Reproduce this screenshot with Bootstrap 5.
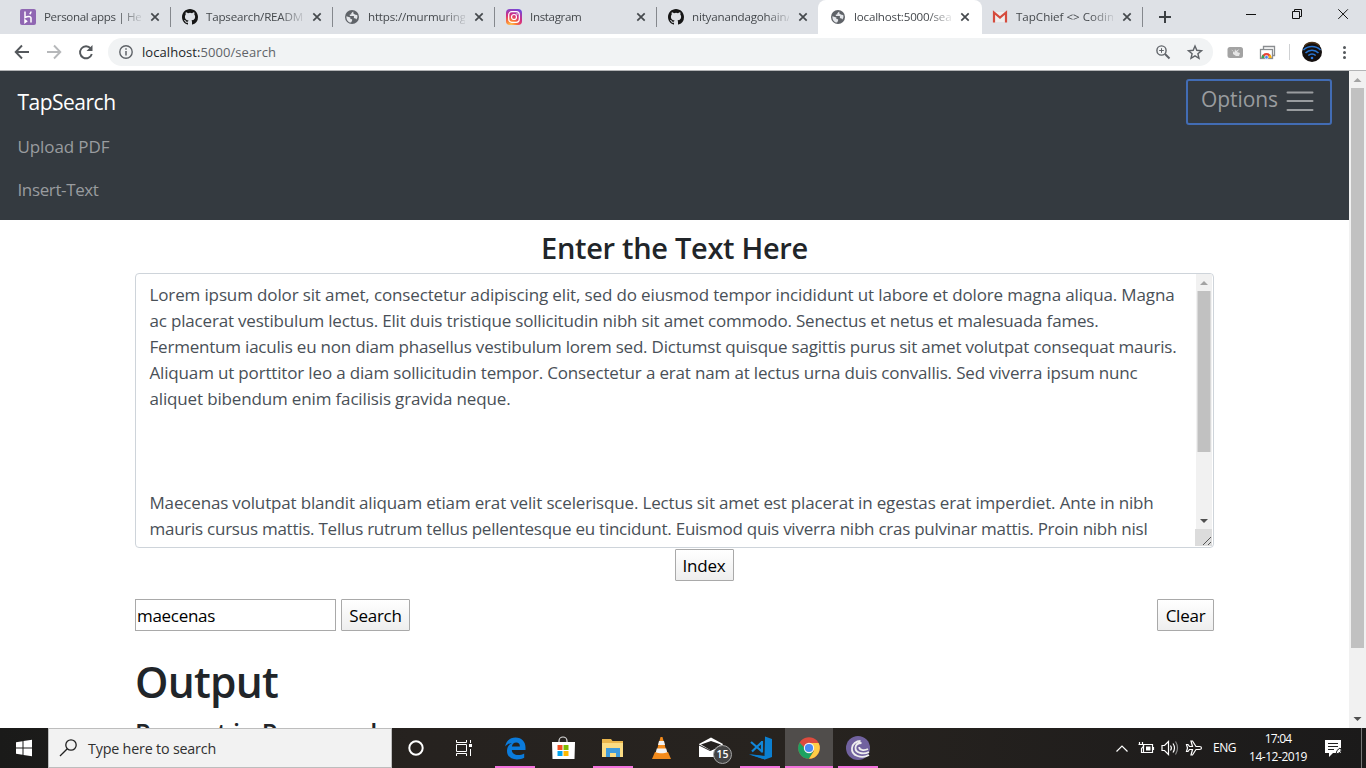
<!DOCTYPE html>
<html lang="en">
<head>
<meta charset="utf-8">
<title>TapSearch</title>
<link rel="stylesheet" href="https://cdn.jsdelivr.net/npm/bootstrap@5.3.0/dist/css/bootstrap.min.css">
<style>
body{font-family:"Open Sans","Noto Sans",sans-serif;width:1366px;height:768px;overflow:hidden;color:#212529}
svg{display:block;flex:none}
.fit{white-space:nowrap;display:inline-block}
.tabstrip{height:34px;background:#dee1e6;padding-left:9px}
.tab{width:162px;height:34px;padding-left:11px;font-size:11.6px;color:#45494d;position:relative}
.tab .ttl{width:97px;margin-left:8px;overflow:hidden;white-space:nowrap;letter-spacing:-.0165em;-webkit-mask-image:linear-gradient(90deg,#000 76%,rgba(0,0,0,.15))}
.tab .ttl.tight{letter-spacing:-.031em}
.tab .ttl.loose{letter-spacing:-.002em}
.tab .x{margin-left:9px}
.tab:after{content:"";width:1px;height:20px;background:#85888d;position:absolute;right:0;top:7px}
.tab.pre:after,.tab.on:after{display:none}
.tab.on:before{content:"";position:absolute;inset:0 -1px 0 -1px;background:#fff;border-radius:8px 8px 0 0}
.tab.on>*{position:relative}
.toolbar{height:36px;background:#fff}
.omni{width:1105px;height:28px;border-radius:14px;background:#f1f3f4;font-size:13px;color:#5f6368}
.omni .fit{padding-top:1px;letter-spacing:.005em}
.viewport{height:658px;border-top:1px solid #b3b4b6;overflow:hidden}
.vbar{background:#f1f1f1}
.topnav{height:149px;background:#343a40;padding:0 17px 0 17.5px}
.brandname{font-size:21px;line-height:33px;color:#fff;margin-top:15px;letter-spacing:-.024em}
.navitem{font-size:17px;line-height:43px;color:#999c9f;letter-spacing:-.006em}
.navitem.first{margin-top:6px}
.navitem.tight{letter-spacing:-.022em}
.opt{width:146px;height:46px;border:2px solid #426cb4;border-radius:3px;margin-top:8px;color:#999c9f;font-size:21px;line-height:37px;padding-left:13px;letter-spacing:-.003em}
.page-col{width:1079px;margin-left:135px}
.h-enter{font-size:29px;font-weight:600;line-height:36px;margin:10px 0 7px;letter-spacing:-.0105em}
.area{height:275px;border:1px solid #ced4da;border-radius:4px;overflow:hidden}
.area .txt{padding:8px 0 0 13.5px;font-size:17px;line-height:26px;color:#495057;min-width:0}
.area .txt div{height:26px}
.l1{letter-spacing:-.0078em}.l2{letter-spacing:-.0107em}.l3{letter-spacing:-.0122em}.l4{letter-spacing:-.0096em}.l5{letter-spacing:-.0089em}.l9{letter-spacing:-.0098em}.l10{letter-spacing:-.0148em}.l11{letter-spacing:-.012em}
.btn-old{height:32px;border:1px solid #a9a9a9;border-radius:1px;background:linear-gradient(#fff,#eee);font-size:17px;line-height:31px;color:#000;text-align:center;letter-spacing:-.014em}
.inp{width:201px;height:32px;border:1px solid #a9a9a9;font-size:17px;line-height:31px;color:#000;padding-left:1px;margin-right:5px;letter-spacing:-.0177em}
.row-index{margin-top:1px;padding-left:59px}
.row-search{margin-top:18px}
.w-index{width:59px}.w-search{width:69px}.w-clear{width:57px}
.h-out{font-size:42.5px;font-weight:600;line-height:52px;margin:25px 0 8px;letter-spacing:-.0178em}
.h-par{font-size:25.3px;font-weight:600;line-height:32px;letter-spacing:-.0129em}
.taskbar{height:40px;background:linear-gradient(90deg,#1a1a19 0,#26221f 30%,#27231f 60%,#1f1d1c 85%,#1b1a1a);position:relative}
.sbox{width:344px;height:40px;background:#f2f2f2;border:1px solid #bdbdbd;font-size:14.3px;color:#303030;letter-spacing:-.0131em}
.sbox .fit{padding-top:1px}
.app{width:49px;height:40px;position:relative}
.app.run:after{content:"";position:absolute;bottom:0;left:4px;width:40px;height:2px;background:#f272dd}
.app.cur{width:48px;background:#504d4b}
.app.cur:after{left:0;width:48px}
.app.last{margin-left:1px}
.cnt{position:absolute;left:26px;top:17px;width:19px;height:19px;border:1px solid #a5a5a5;border-radius:50%;background:#444;color:#fff;font-size:10.5px;font-weight:600;line-height:17px;text-align:center}
.tray{color:#fff;font-size:12px}
.eng{width:24px;margin:0 9px 0 2px;letter-spacing:-.04em}
.clock{font-size:12px;line-height:18px;width:64px}
.clock .time{letter-spacing:-.07em}
.clock .date{letter-spacing:-.0385em}
</style>
</head>
<body>
<svg width="0" height="0" class="position-absolute">
<symbol id="x" viewBox="0 0 10 10"><path d="M1.3 1.3l7.4 7.4M8.7 1.3L1.3 8.7" stroke="#45494d" stroke-width="1.7"/></symbol>
<symbol id="gh" viewBox="0 0 16 16"><path fill="#161616" d="M8 0C3.58 0 0 3.58 0 8c0 3.54 2.29 6.53 5.47 7.59.4.07.55-.17.55-.38 0-.19-.01-.82-.01-1.49-2.01.37-2.53-.49-2.69-.94-.09-.23-.48-.94-.82-1.13-.28-.15-.68-.52-.01-.53.63-.01 1.08.58 1.23.82.72 1.21 1.87.87 2.33.66.07-.52.28-.87.51-1.07-1.78-.2-3.64-.89-3.64-3.95 0-.87.31-1.59.82-2.15-.08-.2-.36-1.02.08-2.12 0 0 .67-.21 2.2.82a7.6 7.6 0 0 1 4 0c1.53-1.04 2.2-.82 2.2-.82.44 1.1.16 1.92.08 2.12.51.56.82 1.27.82 2.15 0 3.07-1.87 3.75-3.65 3.95.29.25.54.73.54 1.48 0 1.07-.01 1.93-.01 2.2 0 .21.15.46.55.38A8 8 0 0 0 16 8c0-4.42-3.58-8-8-8z"/></symbol>
<symbol id="globe" viewBox="0 0 16 16"><circle cx="8" cy="8" r="7" fill="#5f6368"/><path d="M9.2 2.4L7.3 4.3v1.3H5.8v1.5h4.1v2.2h1.4l.9 1.1c1.2-1 1.6-2.6 1-4.3L11.5 5.8 9.5 4.8zM2.4 7.2l4 1.3v1.6l1.7.1v1.5l-1 1.9C4.3 13.5 2.2 11 2.4 7.2z" fill="#e4e6ea"/></symbol>
</svg>

<div class="tabstrip d-flex">
 <div class="tab d-flex align-items-center"><svg width="16" height="16"><rect width="16" height="16" rx="2" fill="#9067b3"/><path d="M5 2.5v6.2c2-1.200 6-2 6 .3v4.500M11 2.500c0 1.200-.6 2-1.300 2.700M5 11v2.500l1.600-1.200z" stroke="#fff" stroke-width="1.5" fill="none"/></svg><div class="ttl tight">Personal apps | He</div><svg class="x" width="10" height="10"><use href="#x"/></svg></div>
 <div class="tab d-flex align-items-center"><svg width="16" height="16"><use href="#gh"/></svg><div class="ttl">Tapsearch/READM</div><svg class="x" width="10" height="10"><use href="#x"/></svg></div>
 <div class="tab d-flex align-items-center"><svg width="16" height="16"><use href="#globe"/></svg><div class="ttl">https://murmuring</div><svg class="x" width="10" height="10"><use href="#x"/></svg></div>
 <div class="tab d-flex align-items-center"><svg width="16" height="16"><defs><radialGradient id="ig" cx=".3" cy="1.05" r="1.15"><stop offset="0" stop-color="#fed45c"/><stop offset=".3" stop-color="#fb7c35"/><stop offset=".6" stop-color="#d62d7e"/><stop offset="1" stop-color="#6c4ae0"/></radialGradient></defs><rect width="16" height="16" rx="4" fill="url(#ig)"/><rect x="2.7" y="2.7" width="10.6" height="10.6" rx="3" fill="none" stroke="#fff" stroke-width="1.2"/><circle cx="8" cy="8" r="2.5" fill="none" stroke="#fff" stroke-width="1.2"/><circle cx="11" cy="5" r=".7" fill="#fff"/></svg><div class="ttl tight">Instagram</div><svg class="x" width="10" height="10"><use href="#x"/></svg></div>
 <div class="tab pre d-flex align-items-center"><svg width="16" height="16"><use href="#gh"/></svg><div class="ttl">nityanandagohain/</div><svg class="x" width="10" height="10"><use href="#x"/></svg></div>
 <div class="tab on d-flex align-items-center"><svg width="16" height="16"><use href="#globe"/></svg><div class="ttl">localhost:5000/sea</div><svg class="x" width="10" height="10"><use href="#x"/></svg></div>
 <div class="tab d-flex align-items-center"><svg width="16" height="16"><path d="M2 3h12v10H2z" fill="#eee"/><path d="M2 13.500V3.500l6 5 6-5v10" fill="none" stroke="#d54b3d" stroke-width="2.2"/></svg><div class="ttl loose">TapChief &lt;&gt; Codin</div><svg class="x" width="10" height="10"><use href="#x"/></svg></div>
 <svg width="222" height="34" viewBox="1143 0 222 34"><path d="M1159 17h12M1165 11v12" stroke="#3c4043" stroke-width="2"/><path d="M1246 14.5h10M1292.5 11.500h7v7h-7zM1294.500 11v-1.500h7v7h-2M1338.300 9.300l9.600 9.600M1347.900 9.300l-9.600 9.600" stroke="#111" fill="none"/></svg>
</div>

<div class="toolbar d-flex align-items-center">
 <svg width="108" height="36" viewBox="0 34 108 36" fill="none" stroke-width="1.9"><path d="M29 52H16M22 45.500L15.700 52l6.300 6.500" stroke="#54585c"/><path d="M47 52h13M54 45.500l6.300 6.500-6.300 6.500" stroke="#b6b8ba"/><path d="M90.700 48.500A6 6 0 1 0 91.800 54" stroke="#54585c"/><path d="M92.500 45v6h-6z" fill="#54585c"/></svg>
 <div class="omni d-flex align-items-center">
  <svg width="34" height="28" viewBox="108 38 34 28"><circle cx="126" cy="52" r="6.2" fill="none" stroke="#5f6368" stroke-width="1.4"/><path d="M126 51v4.500M126 48.200v1.600" stroke="#5f6368" stroke-width="1.5"/></svg>
  <span class="fit"><span class="text-dark">localhost:</span>5000/search</span>
  <svg class="ms-auto" width="63" height="28" viewBox="1150 38 63 28" fill="none" stroke="#5f6368" stroke-width="1.4"><circle cx="1161.5" cy="50.5" r="4.6"/><path d="M1165 54l4.500 4.500" stroke-width="1.9"/><path d="M1159.200 50.500h4.600M1161.500 48.200v4.600" stroke-width="1"/><path d="M1195 46l1.800 4.300 4.700.4-3.600 3 1.100 4.600-4-2.500-4 2.500 1.100-4.600-3.600-3 4.700-.4z"/></svg>
 </div>
 <svg width="153" height="36" viewBox="1213 34 153 36"><rect x="1227.500" y="47" width="15.500" height="11" rx="2.5" fill="#a3a3a3"/><path d="M1231 49.500l2 1v3.500l3 2h3l1-3-3-1 2.500-3-3.500 2-1-2-.5 3.500z" fill="#e6e6e6"/><path d="M1263.500 46.500h11v9h-11z" fill="#fff" stroke="#8a8d90" stroke-width="1.3"/><rect x="1260.5" y="49.5" width="12" height="9" fill="#fff" stroke="#8a8d90" stroke-width="1.3"/><path d="M1261.500 58a5 5 0 0 1 10 0z" fill="#ea4335"/><path d="M1261.500 58a5 5 0 0 1 1.500-3.500l2 3.500z" fill="#34a853"/><path d="M1271.500 58a5 5 0 0 0-1.500-3.500l-2 3.500z" fill="#fbbc05"/><circle cx="1266.5" cy="57.2" r="1.8" fill="#4285f4" stroke="#fff" stroke-width=".7"/><path d="M1289.500 44v16" stroke="#cfd1d3"/><circle cx="1312" cy="52" r="10" fill="#15100f"/><path d="M1303.500 50a12 12 0 0 1 17 0M1305.500 53a9 9 0 0 1 13 0M1308.300 55.500a5.500 5.500 0 0 1 7.400 0" stroke="#2874d0" stroke-width="1.6" fill="none"/><circle cx="1312" cy="58" r="1.3" fill="#2d7be0"/><path d="M1304.500 46a10 10 0 0 1 15 0" stroke="#4c341a" stroke-width="1.5" fill="none"/><g fill="#54585c"><circle cx="1344.500" cy="47.5" r="1.5"/><circle cx="1344.500" cy="52.5" r="1.5"/><circle cx="1344.500" cy="57.5" r="1.5"/></g></svg>
</div>

<div class="viewport d-flex">
 <main class="flex-grow-1 bg-white">
  <nav class="topnav d-flex justify-content-between align-items-start">
   <div class="d-flex flex-column align-items-start">
    <span class="brandname fit">TapSearch</span>
    <span class="navitem first fit">Upload PDF</span>
    <span class="navitem tight fit">Insert-Text</span>
   </div>
   <div class="opt d-flex"><span class="fit">Options</span><svg class="ms-2" width="29" height="37" viewBox="0 0 29 37"><path d="M1.500 11.500h25M1.500 20h25M1.500 29h25" stroke="#999c9f" stroke-width="2" stroke-linecap="round"/></svg></div>
  </nav>
  <div class="page-col">
   <h3 class="h-enter text-center">Enter the Text Here</h3>
   <div class="area d-flex">
    <div class="txt flex-grow-1">
     <div><span class="fit l1">Lorem ipsum dolor sit amet, consectetur adipiscing elit, sed do eiusmod tempor incididunt ut labore et dolore magna aliqua. Magna</span></div>
     <div><span class="fit l2">ac placerat vestibulum lectus. Elit duis tristique sollicitudin nibh sit amet commodo. Senectus et netus et malesuada fames.</span></div>
     <div><span class="fit l3">Fermentum iaculis eu non diam phasellus vestibulum lorem sed. Dictumst quisque sagittis purus sit amet volutpat consequat mauris.</span></div>
     <div><span class="fit l4">Aliquam ut porttitor leo a diam sollicitudin tempor. Consectetur a erat nam at lectus urna duis convallis. Sed viverra ipsum nunc</span></div>
     <div><span class="fit l5">aliquet bibendum enim facilisis gravida neque.</span></div>
     <div></div><div></div><div></div>
     <div><span class="fit l9">Maecenas volutpat blandit aliquam etiam erat velit scelerisque. Lectus sit amet est placerat in egestas erat imperdiet. Ante in nibh</span></div>
     <div><span class="fit l10">mauris cursus mattis. Tellus rutrum tellus pellentesque eu tincidunt. Euismod quis viverra nibh cras pulvinar mattis. Proin nibh nisl</span></div>
     <div><span class="fit l11">condimentum id venenatis a condimentum vitae sapien pellentesque habitant morbi tristique senectus et netus et malesuada</span></div>
    </div>
    <svg width="18" height="273" viewBox="-1 0 18 273"><path d="M0 0h16v256H0z" fill="#f1f1f1"/><path d="M1.500 17h13v161h-13z" fill="#c1c1c1"/><path d="M4 11l4-4 4 4z" fill="#a3a3a3"/><path d="M4 245l4 4 4-4z" fill="#505050"/><path d="M-1 255h17v17H-1z" fill="#dcdcdc"/><path d="M7 271l8-8M12 271l3-3" stroke="#555"/></svg>
   </div>
   <div class="d-flex justify-content-center row-index"><div class="btn-old w-index">Index</div></div>
   <div class="d-flex row-search"><div class="inp">maecenas</div><div class="btn-old w-search">Search</div><div class="btn-old w-clear ms-auto">Clear</div></div>
   <h1 class="h-out">Output</h1>
   <h4 class="h-par">Present in Paragraph</h4>
  </div>
 </main>
 <svg class="vbar" width="17" height="657" viewBox="0 71 17 657"><path d="M2 88h13v560H2z" fill="#c1c1c1"/><path d="M4.500 82l4-4 4 4z" fill="#a3a3a3"/><path d="M4.500 717l4 4 4-4z" fill="#505050"/></svg>
</div>

<footer class="taskbar d-flex">
 <svg width="48" height="40"><path d="M16 14.200l6.500-1v6.300H16zM23.500 13l8.500-1.200v7.700h-8.500zM16 20.500h6.500v6.300l-6.500-1zM23.500 20.500H32v7.700L23.500 27z" fill="#fff"/></svg>
 <div class="sbox d-flex align-items-center"><svg width="39" height="38" viewBox="0 0 39 38" fill="none" stroke="#222" stroke-width="1.3"><circle cx="22" cy="16" r="5.2"/><path d="M18.300 19.700L11 27"/></svg><span class="fit">Type here to search</span></div>
 <svg width="99" height="40" viewBox="392 0 99 40" fill="none"><circle cx="416" cy="20" r="6.7" stroke="#fff" stroke-width="2"/><g stroke="#fff"><path d="M456.500 16.500h10v7h-10zM456.500 12v2.500h10V12M456.500 28v-2.500h10V28M470.500 12v3M470.500 21v7"/><path d="M469 16h3v3h-3z" fill="#fff" stroke="none"/></g></svg>
 <div class="app run"><svg width="49" height="40"><path transform="translate(-.5)" fill="#0b7bdb" d="M14.600 18.500C15.500 13 19.500 9.500 25 9.500c6.500 0 10 4.500 10 10v2.500H21.300c.2 3.500 3 5 6.200 5 2.400 0 4.400-.6 6.200-1.600v4.400c-2 1.200-4.400 1.700-7.300 1.700-6 0-9.900-3.300-9.900-8.600 0-3.800 1.900-6.500 5-8-3.300.4-5.400 2-6.900 3.600zM21.400 18.500h8c0-2.600-1.300-4-3.700-4-2.300 0-3.900 1.500-4.300 4z"/></svg></div>
 <div class="app"><svg width="49" height="40" viewBox="1 0 49 40"><path d="M20 16v-3a4 4 0 0 1 8 0v3" fill="none" stroke="#ddd" stroke-width="1.2"/><path d="M13 14h23l-.5 17h-22z" fill="#fff"/><path d="M18.500 17h5v5h-5z" fill="#f25022"/><path d="M24.500 17h5v5h-5z" fill="#7fba00"/><path d="M18.500 23h5v5h-5z" fill="#00a4ef"/><path d="M24.500 23h5v5h-5z" fill="#ffb900"/></svg></div>
 <div class="app run"><svg width="49" height="40"><path d="M13 11h9l1.500 2H34v16H13z" fill="#eab64c"/><path d="M13 15h21v14H13z" fill="#fbdc83"/><path d="M17 20h14v9h-4v-4h-6v4h-4z" fill="#3f9bdc"/></svg></div>
 <div class="app"><svg width="49" height="40"><path d="M17 24h13l3 7H14z" fill="#f08a1d"/><path d="M22.500 9h2l5 18c-3 2-9 2-12 0z" fill="#f48b1b"/><path d="M21 13h5l1 4h-7zM18.800 20.500h9.400l1 3.800c-3 1.300-8.400 1.300-11.400 0z" fill="#f2f2f2"/></svg></div>
 <div class="app"><svg width="49" height="40"><path d="M12 16l12-6.500L36 16v13H12z" fill="#fff"/><path d="M14 16.500l10-3.500 10 3.500-10 6z" fill="#24211f"/><path d="M12 17l11 5.500L36 17" stroke="#24211f" fill="none"/></svg><span class="cnt">15</span></div>
 <div class="app run"><svg width="49" height="40"><path d="M29 8.500l7 2.500v18l-7 2.500-16-5 15.500 1.500z" fill="#0b7fd0"/><path d="M13 26l16 2v3.500z" fill="#0b7fd0"/><path d="M26 14l-10 9.500M26 23.500l-11-9.500M26 13v11.500" stroke="#1187da" stroke-width="2.2"/></svg></div>
 <div class="app run cur"><svg width="48" height="40"><circle cx="24" cy="20" r="10.8" fill="#dd4b3e"/><path d="M14.600 14.600A10.800 10.800 0 0 0 24 30.800l5-8.300-5 2.500z" fill="#1da261"/><path d="M24 30.800A10.800 10.800 0 0 0 33.600 15H24l5 8z" fill="#ffcd46"/><circle cx="24" cy="20" r="5.2" fill="#f5f5f5"/><circle cx="24" cy="20" r="4.1" fill="#4a8af4"/></svg></div>
 <div class="app run last"><svg width="49" height="40"><circle cx="24" cy="20" r="12" fill="#71629f"/><path d="M35 27c-7 4-18 1-17-7 .5-4 4-7 8.500-7M35 24c-6 3-14 1-13.500-4.500.3-3 3-4.500 6-4.500M34 21c-4 2-9 1-8.800-2" fill="none" stroke="#eee" stroke-width="1.8"/></svg></div>
 <div class="tray d-flex align-items-center ms-auto">
  <svg width="102" height="40" viewBox="1110 728 102 40" fill="none" stroke="#fff" stroke-width="1.2"><path d="M1117.500 751.500l5.500-5.500 5.500 5.500"/><path d="M1144.500 744.500h9v8h-9z"/><path d="M1147 746.500h4.500v4h-4.500z" fill="#fff" stroke="none"/><path d="M1154.500 747v3M1140.500 742v2M1143.500 742v2M1139.500 744.500h5v2l-2 2v4h2"/><path d="M1163 745.500h2.500l4-4v13l-4-4h-2.500zM1171.500 745.500q1.800 2.500 0 5M1174 743.500q3 4.500 0 9"/><path d="M1176.500 741.500q4 6.500 0 13" stroke="#888"/><path d="M1202.500 748q0-1.500-2-1.500h-3.500l-3.500-5.500h-1.500l1.500 5.500h-3l-1.500-2h-1.500l1 3.500-1 3.500h1.500l1.500-2h3l-1.500 5.500h1.500l3.500-5.500h3.500q2 0 2-1.500z"/></svg>
  <span class="fit eng">ENG</span>
  <div class="clock text-center"><div class="time">17:04</div><div class="date">14-12-2019</div></div>
  <svg width="56" height="40" viewBox="1310 728 56 40"><path d="M1325 740h16v13h-8l-4 4v-4h-4z" fill="#fff"/><path d="M1328 743.500h10M1328 746.500h10M1328 749.500h6" stroke="#222"/><path d="M1340 748q-4 2-4 6l3-1q3-1 2-4zM1334 756h3" fill="#fff" stroke="#222"/><path d="M1361.500 728v40" stroke="#777"/></svg>
 </div>
</footer>
<script src="https://cdn.jsdelivr.net/npm/bootstrap@5.3.0/dist/js/bootstrap.bundle.min.js"></script>
</body>
</html>
